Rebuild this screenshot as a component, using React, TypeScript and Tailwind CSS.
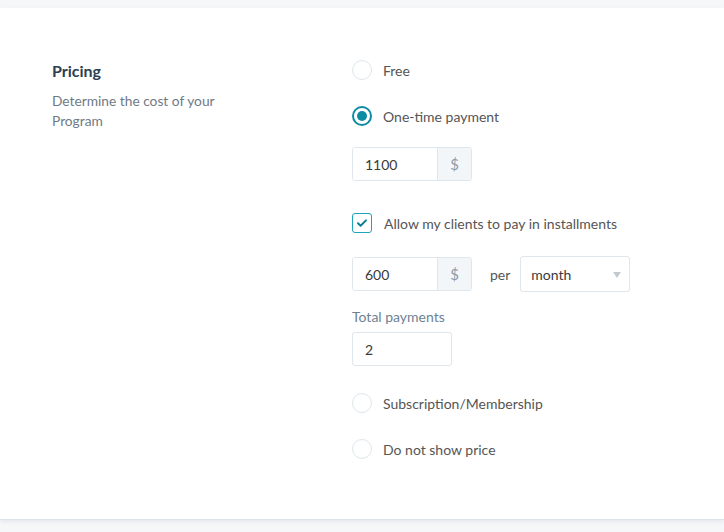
import { useState } from 'react';

type Plan = 'free' | 'onetime' | 'subscription' | 'hidden';

function Radio({ checked, label, onClick }: { checked: boolean; label: string; onClick: () => void }) {
  return (
    <button type="button" onClick={onClick} className="flex h-5 items-center gap-[11px] text-left">
      <span
        className={
          checked
            ? 'flex h-5 w-5 items-center justify-center rounded-full border-2 border-[#0b8ca3] bg-white'
            : 'flex h-5 w-5 items-center justify-center rounded-full border border-[#dde6eb] bg-white'
        }
      >
        {checked && <span className="h-[10px] w-[10px] rounded-full bg-[#0b8ca3]" />}
      </span>
      <span className="text-[14px] text-[#555]">{label}</span>
    </button>
  );
}

function MoneyInput({ value, onChange }: { value: string; onChange: (v: string) => void }) {
  return (
    <div className="flex h-[34px] w-[120px] overflow-hidden rounded-[3px] border border-[#dfe7ec]">
      <input
        value={value}
        onChange={(e) => onChange(e.target.value)}
        className="w-[84px] bg-white px-3 text-[14px] text-[#3a3a3a] outline-none"
      />
      <span className="flex flex-1 items-center justify-center border-l border-[#dfe7ec] bg-[#f3f6f8] text-[15px] text-[#8b9cab]">
        $
      </span>
    </div>
  );
}

export default function App() {
  const [plan, setPlan] = useState<Plan>('onetime');
  const [price, setPrice] = useState('1100');
  const [installments, setInstallments] = useState(true);
  const [partial, setPartial] = useState('600');
  const [total, setTotal] = useState('2');

  return (
    <div className="min-h-[532px] bg-[#f6f7f9] pt-2 font-['Lato','Liberation_Sans',sans-serif]">
      <div className="flex border-b border-[#dbe4e8] bg-white pb-[60px] pl-[52px] pt-[52px] shadow-[0_2px_4px_rgba(180,195,205,0.25)]">
        <div className="w-[300px]">
          <h2 className="text-[16px] leading-[22px] font-bold text-[#2d4053]">Pricing</h2>
          <p className="mt-[9px] w-[180px] text-[13.75px] leading-[20px] text-[#6f7a86]">
            Determine the cost of your Program
          </p>
        </div>

        <div className="flex flex-col items-start">
          <Radio checked={plan === 'free'} label="Free" onClick={() => setPlan('free')} />
          <div className="mt-[26px]">
            <Radio checked={plan === 'onetime'} label="One-time payment" onClick={() => setPlan('onetime')} />
          </div>
          <div className="mt-[21px]">
            <MoneyInput value={price} onChange={setPrice} />
          </div>

          <button
            type="button"
            onClick={() => setInstallments(!installments)}
            className="mt-8 flex h-5 items-center gap-[12px]"
          >
            <span className="flex h-5 w-5 items-center justify-center rounded-[3px] border border-[#1ea4bb] bg-white">
              {installments && (
                <svg viewBox="0 0 12 12" className="h-3 w-3" fill="none">
                  <path d="M2 6.3l2.6 2.5L10 3.4" stroke="#0b7f96" strokeWidth="2" strokeLinecap="round" strokeLinejoin="round" />
                </svg>
              )}
            </span>
            <span className="text-[14px] text-[#555]">Allow my clients to pay in installments</span>
          </button>

          <div className="mt-[23px] flex items-center">
            <MoneyInput value={partial} onChange={setPartial} />
            <span className="ml-[18px] mr-[10px] text-[14px] text-[#555]">per</span>
            <div className="relative flex h-9 w-[110px] items-center rounded-[3px] border border-[#dfe7ec] bg-white pl-[10px]">
              <span className="text-[14px] text-[#3a3a3a]">month</span>
              <span className="absolute right-[8px] top-[15px] h-0 w-0 border-x-[4px] border-t-[6px] border-x-transparent border-t-[#c3cacf]" />
            </div>
          </div>

          <label className="mt-4 text-[14px] leading-[18px] text-[#6e8294]">Total payments</label>
          <input
            value={total}
            onChange={(e) => setTotal(e.target.value)}
            className="mt-[6px] h-[34px] w-[100px] rounded-[3px] border border-[#dfe7ec] px-3 text-[14px] text-[#3a3a3a] outline-none"
          />

          <div className="mt-[27px]">
            <Radio
              checked={plan === 'subscription'}
              label="Subscription/Membership"
              onClick={() => setPlan('subscription')}
            />
          </div>
          <div className="mt-[26px]">
            <Radio checked={plan === 'hidden'} label="Do not show price" onClick={() => setPlan('hidden')} />
          </div>
        </div>
      </div>
    </div>
  );
}
